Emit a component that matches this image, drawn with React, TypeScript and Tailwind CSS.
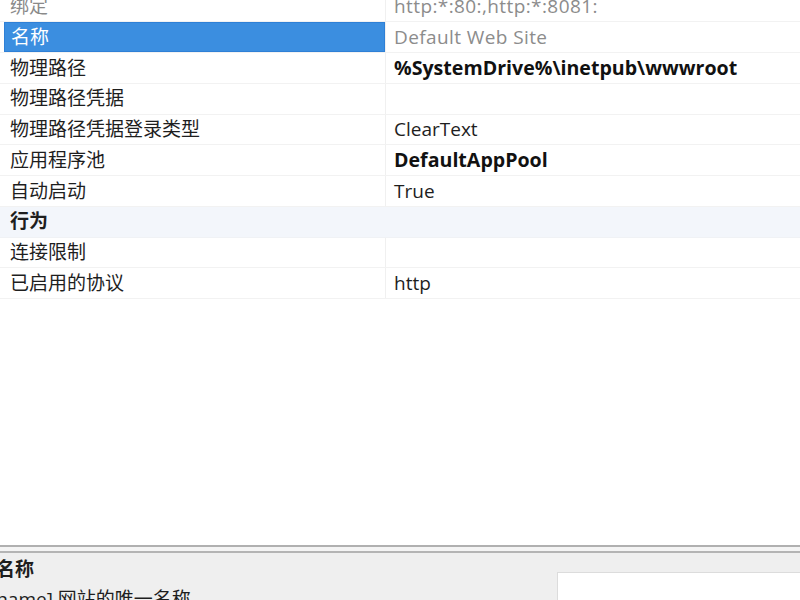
import React from "react";

type Row = { name: string; value?: string; bold?: boolean; gray?: boolean; nameGray?: boolean; selected?: boolean; category?: boolean };

const rows: Row[] = [
  { name: "绑定", value: "http:*:80:,http:*:8081:", gray: true, nameGray: true },
  { name: "名称", value: "Default Web Site", gray: true, selected: true },
  { name: "物理路径", value: "%SystemDrive%\\inetpub\\wwwroot", bold: true },
  { name: "物理路径凭据", value: "" },
  { name: "物理路径凭据登录类型", value: "ClearText" },
  { name: "应用程序池", value: "DefaultAppPool", bold: true },
  { name: "自动启动", value: "True" },
  { name: "行为", category: true },
  { name: "连接限制", value: "" },
  { name: "已启用的协议", value: "http" },
];

const font = { fontFamily: '"Open Sans", "Noto Sans CJK SC", sans-serif' };

export default function App() {
  return (
    <div className="w-[800px] h-[600px] overflow-hidden bg-white flex flex-col text-[19px] text-[#1e1e1e]" style={font}>
      <div className="flex flex-col mt-[-8.5px]">
        {rows.map((r, i) => {
          if (r.category) {
            return (
              <div key={i} className="h-[30.75px] flex items-center bg-[#f3f6fb] border-b border-[#f0f2f5]">
                <span className="pl-[10px] font-bold">{r.name}</span>
              </div>
            );
          }
          return (
            <div key={i} className="h-[30.75px] flex border-b border-[#f2f2f2]">
              <div className="w-[385px] shrink-0 flex items-center pl-[4px]">
                <div className={`w-full h-full flex items-center pl-[6px] ${r.selected ? "bg-[#3b8ee0] text-white border border-[#2f80d6]" : ""} ${r.nameGray ? "text-[#8a8a8a]" : ""}`}>
                  {r.name}
                </div>
              </div>
              <div className={`flex-1 flex items-center pl-[8px] border-l border-[#f0f0f0] ${r.bold ? "font-bold text-[#111] text-[19.6px]" : ""} ${r.gray ? "text-[#8c8c8c] tracking-[0.4px]" : ""}`}>
                {r.value}
              </div>
            </div>
          );
        })}
      </div>
      <div className="flex-1" />
      <div className="h-[2px] bg-[#b0b0b0]" />
      <div className="h-[4px] bg-[#f4f4f4]" />
      <div className="h-[2px] bg-[#b4b4b4]" />
      <div className="h-[47px] bg-[#efefef] flex">
        <div className="flex-1 flex flex-col ml-[-4px] pt-[4px]">
          <div className="font-bold leading-[24px]">名称</div>
          <div className="leading-[24px] mt-[6px] ml-[-6px]">[name] 网站的唯一名称</div>
        </div>
        <div className="w-[243px] mt-[19px] bg-white border-l border-t border-[#dcdcdc]" />
      </div>
    </div>
  );
}
